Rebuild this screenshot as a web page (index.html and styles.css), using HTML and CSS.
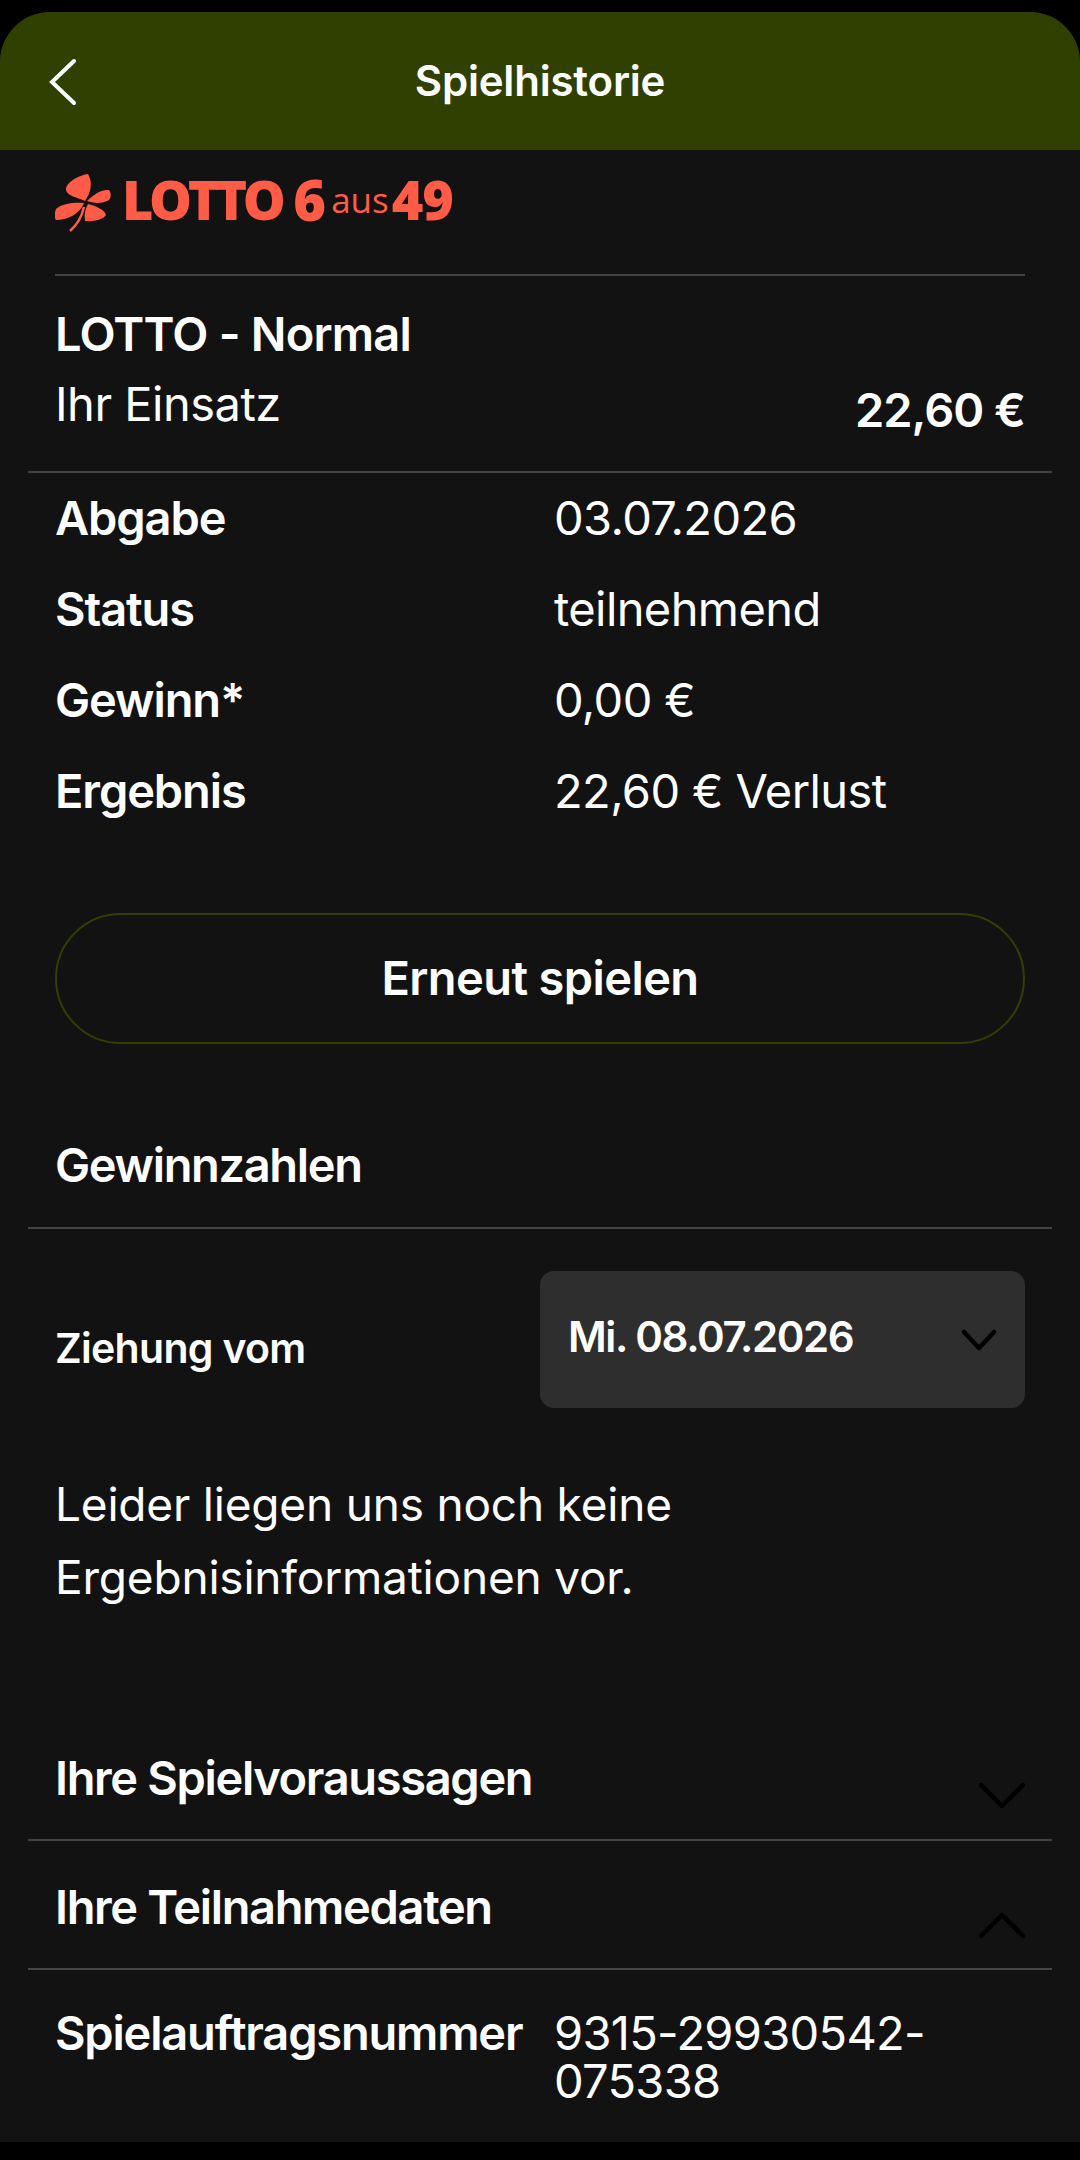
FILE: index.html
```html
<!DOCTYPE html>
<html lang="de">
  <head>
    <meta charset="utf-8" />
    <meta name="viewport" content="width=device-width, initial-scale=1" />
    <title>Spielhistorie</title>
    <link rel="stylesheet" href="styles.css">
  </head>
  <body>
    <div class="screen">
      <header class="topbar">
        <svg class="back" viewBox="0 0 28 48" width="28" height="48"><path d="M25 3 L3 24 L25 45" /></svg>
        <h1>Spielhistorie</h1>
      </header>

      <div class="inset">
        <div class="logo">
          <svg class="clover" viewBox="0 0 60 60" width="60" height="60">
            <path d="M30 27 C22 23 10 22 11 14 C13 7 25 1 33 0 C38 8 36 19 30 27 Z" />
            <path d="M32 27 C38 21 46 15 54 16 C57 20 56 26 52 27 C46 30 38 29 32 27 Z" />
            <path d="M29 29 C21 28 7 29 1 35 C-1 40 0 45 1 46 C12 46 25 40 29 29 Z" />
            <path d="M33 30 C41 32 50 36 51 41 C48 46 37 48 30 47 C29 41 30 35 33 30 Z" />
            <path class="stem" d="M29 33 C27 42 23 50 15 57" />
          </svg>
          <span class="logo-word">LOTTO</span>
          <span class="logo-six">6</span>
          <span class="logo-aus">aus</span>
          <span class="logo-num">49</span>
        </div>
        <div class="title-block">
          <div class="game">LOTTO - Normal</div>
          <div class="stake">
            <span>Ihr Einsatz</span>
            <strong>22,60 €</strong>
          </div>
        </div>
      </div>

      <div class="rule"></div>

      <div class="inset rows">
        <div class="row"><b>Abgabe</b><span>03.07.2026</span></div>
        <div class="row"><b>Status</b><span>teilnehmend</span></div>
        <div class="row"><b>Gewinn*</b><span>0,00 €</span></div>
        <div class="row"><b>Ergebnis</b><span>22,60 € Verlust</span></div>
      </div>

      <div class="inset">
        <button class="again">Erneut spielen</button>
        <h2 class="numbers">Gewinnzahlen</h2>
      </div>

      <div class="rule"></div>

      <div class="inset">
        <div class="draw">
          <span class="draw-label">Ziehung vom</span>
          <div class="select">
            <span>Mi. 08.07.2026</span>
            <svg class="chev-small" viewBox="0 0 36 24" width="36" height="24"><path d="M3 4 L18 20 L33 4" /></svg>
          </div>
        </div>
        <p class="notice">Leider liegen uns noch keine Ergebnisinformationen vor.</p>
      </div>

      <div class="section first">
        <h2>Ihre Spielvoraussagen</h2>
        <svg class="chev" viewBox="0 0 46 26" width="46" height="26"><path d="M2 2 L23 23 L44 2" /></svg>
      </div>
      <div class="rule"></div>
      <div class="section">
        <h2>Ihre Teilnahmedaten</h2>
        <svg class="chev" viewBox="0 0 46 26" width="46" height="26"><path d="M2 24 L23 3 L44 24" /></svg>
      </div>
      <div class="rule"></div>

      <div class="inset order">
        <b>Spielauftragsnummer</b>
        <span>9315-29930542-075338</span>
      </div>
    </div>
  </body>
</html>
```

FILE: styles.css
```css
* {
  box-sizing: border-box;
}

body {
  margin: 0;
  background: #000;
  color: #fff;
  font-family: Inter, "Liberation Sans", sans-serif;
}

b, strong, h1, h2 {
  font-weight: 600;
}

.screen {
  margin-top: 12px;
  height: 2130px;
  background: #121212;
  border-radius: 50px 50px 0 0;
  overflow: hidden;
}

.topbar {
  height: 138px;
  background: #304000;
  display: flex;
  align-items: center;
  justify-content: center;
  padding-bottom: 2px;
  position: relative;
}

.topbar h1 {
  margin: 0;
  font-size: 42px;
  letter-spacing: -0.2px;
}

.back {
  position: absolute;
  left: 49px;
  top: 46px;
}

.back path {
  fill: none;
  stroke: #fff;
  stroke-width: 4;
  stroke-linecap: round;
}

.inset {
  padding: 0 55px;
}

.rule {
  height: 2px;
  margin: 0 28px;
  background: #444;
}

/* logo */
.logo {
  height: 126px;
  border-bottom: 2px solid #444;
  display: flex;
  align-items: flex-start;
  padding-top: 24px;
  color: #ff5c47;
  font-family: "Open Sans", sans-serif;
  font-weight: 800;
  line-height: 50px;
}

.clover {
  fill: #ff5c47;
  margin-right: 7px;
}

.clover .stem {
  fill: none;
  stroke: #ff5c47;
  stroke-width: 2.5;
}

.logo-word {
  font-size: 54px;
  letter-spacing: -4.4px;
}

.logo-six {
  font-size: 56px;
  margin-left: 12px;
}

.logo-aus {
  font-size: 35px;
  font-weight: 400;
  margin-left: 5px;
  padding-top: 1px;
}

.logo-num {
  font-size: 54px;
  margin-left: 3px;
  letter-spacing: -1px;
}

.title-block {
  height: 195px;
  padding-top: 31px;
}

.game {
  font-size: 47px;
  line-height: 54px;
  font-weight: 600;
  letter-spacing: -0.8px;
}

.stake {
  display: flex;
  justify-content: space-between;
  font-size: 47px;
  letter-spacing: -0.5px;
  line-height: 54px;
  margin-top: 16px;
}

.stake strong {
  padding-top: 6px;
  letter-spacing: -1px;
}

/* detail rows */
.rows {
  margin-top: -1px;
  height: 441px;
}

.row {
  display: grid;
  grid-template-columns: 499px 1fr;
  height: 91px;
  align-items: center;
  font-size: 47px;
  letter-spacing: -0.6px;
}

.row b {
  letter-spacing: -1.1px;
}

.again {
  display: block;
  width: 100%;
  height: 131px;
  padding-bottom: 4px;
  border: 2px solid #304000;
  border-radius: 66px;
  background: none;
  color: #fff;
  font: 600 47px Inter, "Liberation Sans", sans-serif;
  letter-spacing: -0.6px;
}

h2 {
  margin: 0;
  font-size: 47px;
  letter-spacing: -1.35px;
}

.numbers {
  height: 183px;
  padding-top: 95px;
  line-height: 52px;
}

.draw {
  display: grid;
  grid-template-columns: 1fr 485px;
  align-items: center;
  padding-top: 42px;
}

.draw-label {
  font-size: 41px;
  font-weight: 600;
  letter-spacing: -0.7px;
  padding-top: 16px;
}

.select {
  height: 137px;
  background: #2e2e2e;
  border-radius: 14px;
  display: flex;
  justify-content: space-between;
  align-items: center;
  padding: 0 28px 7px;
  font-size: 42px;
  font-weight: 600;
  letter-spacing: -1.4px;
}

.chev-small path,
.chev path {
  fill: none;
  stroke: #000;
  stroke-width: 4.5;
  stroke-linecap: round;
  stroke-linejoin: round;
}

.chev-small {
  margin: 8px 0 0;
}

.notice {
  margin: 60px 0 0;
  width: 720px;
  font-size: 46px;
  letter-spacing: -0.2px;
  line-height: 73px;
}

.section {
  height: 127px;
  margin: 0 55px;
  display: flex;
  justify-content: space-between;
  padding-top: 40px;
  line-height: 52px;
}

.section.first {
  margin-top: 98px;
}

.chev {
  margin-top: 31px;
}

.order {
  display: grid;
  grid-template-columns: 499px 1fr;
  padding-top: 39px;
  font-size: 47px;
  letter-spacing: -0.7px;
  line-height: 48px;
}

.order b {
  letter-spacing: -1.2px;
}
```
